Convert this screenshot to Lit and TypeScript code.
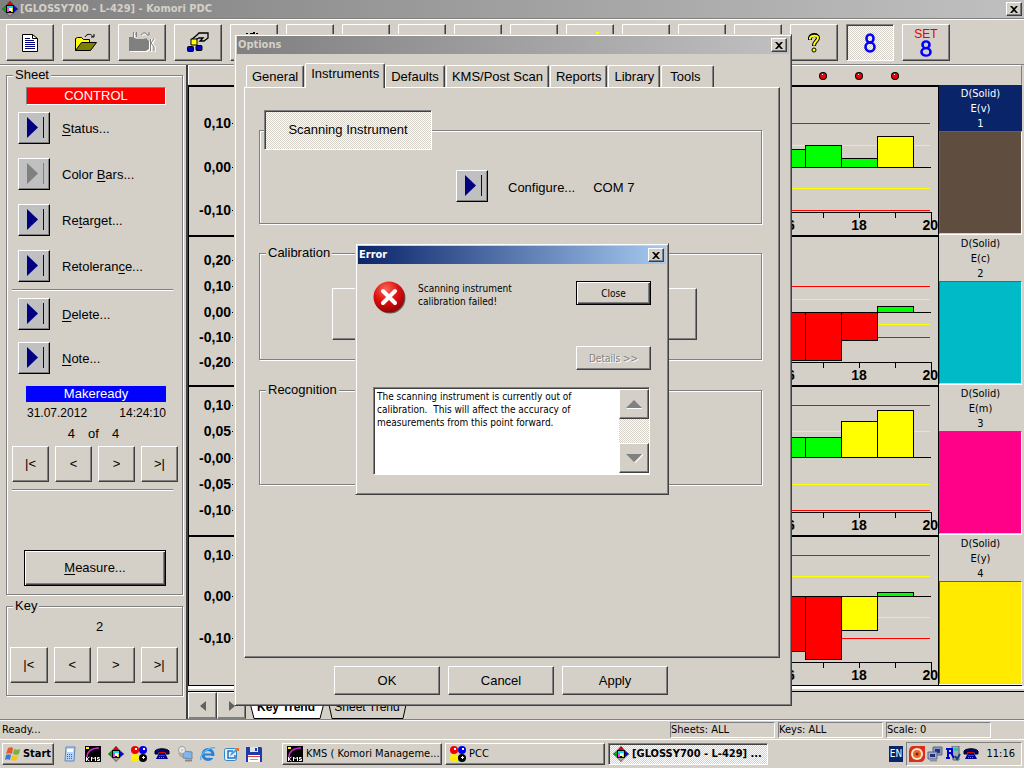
import { LitElement, html, svg, css, nothing, TemplateResult } from "lit";
import { customElement, state } from "lit/decorators.js";
import { classMap } from "lit/directives/class-map.js";

type Color = "lime" | "yellow" | "red";
interface Bar { y: number; color: Color; }
interface Chart {
  name: string;
  index: number;
  swatch: string;
  labels: [string, number][];
  lines: [number, Color][];
  zero: number;
  bars: Bar[];
}

const FILL: Record<Color, string> = { lime: "#00ff00", yellow: "#ffff00", red: "#ff0000" };

const CHARTS: Chart[] = [
  {
    name: "E(v)", index: 1, swatch: "#5f4d3f", zero: 82,
    labels: [["0,10", 38], ["0,00", 82], ["-0,10", 125]],
    lines: [[38, "red"], [60, "yellow"], [103, "yellow"], [125, "red"]],
    bars: [{ y: 64, color: "lime" }, { y: 60, color: "lime" }, { y: 73, color: "lime" }, { y: 51, color: "yellow" }],
  },
  {
    name: "E(c)", index: 2, swatch: "#00bac8", zero: 77,
    labels: [["0,20", 25], ["0,10", 51], ["0,00", 77], ["-0,10", 102], ["-0,20", 127]],
    lines: [[51, "red"], [64, "yellow"], [89, "yellow"], [102, "red"]],
    bars: [{ y: 125, color: "red" }, { y: 125, color: "red" }, { y: 105, color: "red" }, { y: 71, color: "lime" }],
  },
  {
    name: "E(m)", index: 3, swatch: "#ff0088", zero: 72,
    labels: [["0,10", 20], ["0,05", 46], ["-0,00", 73], ["-0,05", 99], ["-0,10", 125]],
    lines: [[20, "red"], [46, "yellow"], [99, "yellow"], [125, "red"]],
    bars: [{ y: 52, color: "lime" }, { y: 52, color: "lime" }, { y: 36, color: "yellow" }, { y: 25, color: "yellow" }],
  },
  {
    name: "E(y)", index: 4, swatch: "#ffea00", zero: 61,
    labels: [["0,10", 20], ["0,00", 61], ["-0,10", 103]],
    lines: [[20, "red"], [41, "yellow"], [82, "yellow"], [103, "red"]],
    bars: [{ y: 116, color: "red" }, { y: 124, color: "red" }, { y: 95, color: "yellow" }, { y: 57, color: "lime" }],
  },
];

const icon = (w: number, h: number, body: TemplateResult) =>
  html`<svg class="icon" width=${w} height=${h} viewBox="0 0 ${w} ${h}" aria-hidden="true">${body}</svg>`;

const diamond = () => icon(16, 16, svg`
  <path d="M8 0l4 5H4z" fill="#e00000"/><path d="M16 8l-5 4V4z" fill="#0000e0"/>
  <path d="M0 8l5-4v8z" fill="#00b000"/><path d="M8 16l-4-5h8z" fill="#a0a0a0"/>
  <path d="M4 4h8v8H4z" fill="#000"/><path d="M5 5h6v2H5z" fill="#00e0f0"/><path d="M5 7h2v4H5z" fill="#f040f0"/>
  <path d="M9 7h2v4H9z" fill="#f0e000"/><path d="M7 7h3v3H7z" fill="#fff"/>
  <path d="M8 .5L15.5 8 8 15.5.5 8z" fill="none" stroke="#333" stroke-width=".6"/>`);

const kms = () => icon(16, 16, svg`
  <path d="M0 0h16v16H0z" fill="#000"/><path d="M2 11C2 6 6 2 14 2" fill="none" stroke="#d020d0" stroke-width="1.6"/>
  <path d="M1 1h3v2H1z" fill="#ffff00"/>
  <path d="M1.500 11v4M4.500 11l-3 2 3 2M6.500 15v-4l2 2 2-2v4M14.500 11.500h-2v1.500h2v1.500h-2.500" fill="none" stroke="#fff" stroke-width="1"/>`);

const balls = () => icon(16, 16, svg`
  <circle cx="4" cy="4" r="4" fill="#f00000"/><circle cx="12" cy="4" r="4" fill="#0000e8"/>
  <circle cx="4" cy="12" r="4" fill="#ffee00"/><circle cx="12" cy="12" r="4" fill="#000"/>
  <path d="M4 2h2v2H4zM12 2h2v2h-2zM12 10h1v3h-1zM11 11h3v1h-3z" fill="#fff"/>`);

const phone = () => icon(16, 16, svg`
  <path d="M1 5c2-3 12-3 14 0v3h-3V6H4v2H1z" fill="#000080" stroke="#000"/>
  <path d="M5 7h6l3 6H2z" fill="#000098"/><path d="M5.500 9.500h5M5 11.500h6" stroke="#f06060" stroke-dasharray="1 1"/><path d="M5 6.500h6" stroke="#e00000"/>`);

const calc = () => icon(16, 16, svg`
  <path d="M4 1h9l-1 14H3z" fill="#b8d4f4" stroke="#5a86c4"/><path d="M5 3h6v3H5z" fill="#fff"/>
  <path d="M5 8.500h6M5 10.500h6M5 12.500h6" stroke="#3a66b0" stroke-dasharray="1 1"/>`);

const search = () => icon(16, 16, svg`
  <path d="M6 5l9 1v7l-9-1z" fill="#7cb8ee" stroke="#7a8490"/><path d="M8 14.500h7" stroke="#888" stroke-width="2"/>
  <circle cx="5" cy="4" r="3.500" fill="#f2f2f0" stroke="#999"/><circle cx="5" cy="4" r="1.500" fill="#c4ccd4"/><path d="M2 7l3 4" stroke="#a8a8a8" stroke-width="2"/>`);

const explorer = () => icon(16, 16, svg`
  <circle cx="8" cy="8.500" r="5" fill="none" stroke="#2480d8" stroke-width="3"/><path d="M4 8.500h9" stroke="#2480d8" stroke-width="2"/>
  <path d="M10 10h6v2h-6z" fill="#d4d0c8"/><path d="M1 14C-1 9 9 0 15 2" fill="none" stroke="#5cb4f4" stroke-width="1.500"/>`);

const mail = () => icon(16, 16, svg`
  <rect x="1.500" y="2.500" width="12" height="12" rx="2" fill="#e4f2fc" stroke="#2c88cc"/>
  <path d="M10 5H5v7h7V9" fill="none" stroke="#2c70b8" stroke-width="1.500"/><path d="M7 10l1-3 6-5 1 2-6 5z" fill="#58a0d8"/><path d="M13 2h3v3h-2z" fill="#f07020"/>`);

const floppy = () => icon(16, 16, svg`
  <path d="M0 1h15l1 1v14H0z" fill="#1c3ca8"/><path d="M4 1h8v5H4z" fill="#e0e4f0"/><path d="M9 2h2v3H9z" fill="#1c3ca8"/>
  <path d="M2 9h12v7H2z" fill="#fff"/><path d="M2 10.500h12" stroke="#e04040"/><path d="M4 13.500h8" stroke="#a0a0a0"/>`);

const windows = () => icon(16, 16, svg`
  <path d="M3 2c2-1 4-1 5 0L7 8c-2-1-4-1-6 0z" fill="#e8582c"/><path d="M9 3c2 1 4 1 6 0l-1 5c-2 1-4 1-6 0z" fill="#74b43c"/>
  <path d="M1 9c2-1 4-1 5 0l-1 5c-2-1-3-1-5 0z" fill="#3c78d8"/><path d="M7 9c2 1 4 1 6 0l-1 5c-2 1-4 1-6 0z" fill="#f4c420"/>`);

const bullseye = () => icon(16, 16, svg`
  <path d="M4 0h12v11c0 3-2 5-5 5H0V5c0-3 2-5 4-5z" fill="#d83018"/><circle cx="8" cy="8" r="6" fill="#fbe8d0"/>
  <circle cx="8" cy="8" r="4" fill="#e86828"/><circle cx="8" cy="8" r="1.500" fill="#802010"/>`);

const network = () => icon(16, 16, svg`
  <path d="M6 1h9v8H6z" fill="#8898c0" stroke="#606880"/><path d="M8 3h5v4H8z" fill="#203080"/>
  <path d="M1 6h9v7H1z" fill="#a0acd0" stroke="#606880"/><path d="M3 8h5v3H3z" fill="#203080"/><path d="M3 14.500h7" stroke="#8890a0" stroke-width="2"/>`);

const usage = () => icon(16, 16, svg`
  <path d="M7 0h7v14H8z" fill="#a8acb0" stroke="#606468"/><path d="M9 2h4v3H9z" fill="#30c0b0"/>
  <path d="M3 12V3h4v4H3M6 7l3 5M1 3h3M1 12h4" fill="none" stroke="#0000d0" stroke-width="2"/><path d="M10 10l2 3 3-5" fill="none" stroke="#104080" stroke-width="2"/>`);

const crossIcon = () => icon(8, 7, svg`<path d="M0 0h2l2 2 2-2h2L5 3.500 8 7H6L4 5 2 7H0l3-3.500z" fill="#000"/>`);
const play = () => icon(30, 30, svg`<path d="M8 4l11 10.500L8 25z" fill="currentColor"/><path d="M24.500 4v21" stroke="currentColor"/>`);

const eight = (h: number) => html`<svg class="icon" width="12" height=${h} viewBox="0 0 12 20" preserveAspectRatio="none" aria-hidden="true">
  <ellipse cx="6" cy="5.500" rx="3.500" ry="4" fill="none" stroke="#0000ff" stroke-width="2.600"/>
  <ellipse cx="6" cy="14" rx="4.500" ry="4.500" fill="none" stroke="#0000ff" stroke-width="2.600"/></svg>`;

const TOOLS: { name: string; kind?: string; body?: () => unknown }[] = [
  { name: "New", body: () => icon(16, 18, svg`<path d="M.5.5h10l5 4v13H.5z" fill="#fff" stroke="#000"/><path d="M10.500.5v4h5" fill="none" stroke="#000"/><path d="M3 4.500h5M3 6.500h9M3 8.500h10M3 10.500h10M3 12.500h10M3 14.500h10" stroke="#000080"/>`) },
  { name: "Open", body: () => icon(24, 20, svg`<path d="M1.500 17.500V5.500l2-1h4l2 2h6v4" fill="#ffff00" stroke="#000"/><path d="M1.500 17.500l6-8h15l-6 8z" fill="#808000" stroke="#000"/><path d="M11 4c2-4 7-3 8 0M17 4h3V1" fill="none" stroke="#000"/>`) },
  { name: "Close job", kind: "off", body: () => icon(28, 24, svg`<path d="M2 7h5l2 2h8l2-1 3 3v8l-3 2H2z" fill="#fff"/><path d="M1 6h5l2 2h8l2-1 3 3v8l-3 2H1z" fill="#808080"/><path d="M5.500 1v5M8.500 1v5M5.500 3h3M13 4c2-3 5-3 6 0h2V1" fill="none" stroke="#808080"/><path d="M6.500 2v5M14 5c2-2 3-2 5 0" fill="none" stroke="#fff"/><path d="M23.500 8v13M27 8l-3 5 3 3v5" fill="none" stroke="#fff" stroke-width="1.500"/><path d="M22.500 8v12M26 8l-3 4 3 4v4" fill="none" stroke="#808080"/>`) },
  { name: "Select colors", body: () => icon(24, 22, svg`<path d="M5 8l6-5 2-2h9v5l-4 3h-4l3-3h-4l-4 2" fill="#d4d0c8" stroke="#000" stroke-width="1.300"/><path d="M5 7h6v6H5z" fill="#ffff00" stroke="#000"/><rect x="1.500" y="14.500" width="6" height="5" rx="1" fill="#0000c8" stroke="#000"/><rect x="10" y="13.500" width="6" height="5" rx="1" fill="#0000c8" stroke="#000"/>`) },
  { name: "Press", body: () => icon(24, 22, svg`<path d="M4 1h2v2H4zM8 1h3V0h2v3H8zM14 1h2v2h-2z" fill="#000"/>`) },
  { name: "Zoom" }, { name: "Copy" }, { name: "Trend" }, { name: "Target" }, { name: "Tolerance" },
  { name: "Highlight", body: () => icon(24, 22, svg`<path d="M18 0h3v2h-3z" fill="#ffff00"/>`) },
  { name: "Print" }, { name: "Layout" }, { name: "Setup" },
  { name: "Help", body: () => icon(14, 20, svg`<path d="M3 7V5c1-4 8-4 8 0 0 3-4 3-4 8" fill="none" stroke="#000" stroke-width="4"/><path d="M3 6.500V5c1-3 8-3 8 0 0 3-4 3-4 7.500" fill="none" stroke="#ffff00" stroke-width="2"/><circle cx="7" cy="17" r="2" fill="#ffff00" stroke="#000"/>`) },
  { name: "Eight", kind: "on", body: () => eight(20) },
  { name: "Set eight", body: () => html`<span class="set">SET</span>${eight(17)}` },
];

@customElement("app-root")
export class AppRoot extends LitElement {
  @state() private tab = "Instruments";

  static styles = css`
    :host {
      display: grid;
      grid-template-rows: 18px 47px 1fr 20px 29px;
      position: relative;
      min-height: 100vh;
      box-sizing: border-box;
      overflow: hidden;
      background: #d4d0c8;
      color: #000;
      font: 13px/16px "Liberation Sans", Arial, sans-serif;
      cursor: default;
    }
    * { box-sizing: border-box; }
    button, textarea { font: inherit; color: inherit; }
    .icon { display: block; flex: none; }
    u { text-underline-offset: 2px; }

    button {
      display: flex;
      align-items: center;
      justify-content: center;
      margin: 0;
      padding: 0;
      background: #d4d0c8;
      border: 1px solid;
      border-color: #fff #404040 #404040 #fff;
      border-radius: 0;
      box-shadow: inset -1px -1px 0 #808080;
    }
    button.on {
      border-color: #808080 #fff #fff #808080;
      box-shadow: inset 1px 1px 0 #404040;
      background: repeating-conic-gradient(#fff 0 25%, #d4d0c8 0 50%) 0 0 / 2px 2px;
    }
    button.default { border: 1px solid #000; box-shadow: inset 1px 1px 0 #fff, inset -1px -1px 0 #404040, inset -2px -2px 0 #808080; }
    button:disabled { color: #808080; text-shadow: 1px 1px 0 #fff; }
    button.play { width: 32px; height: 32px; background: #c0c0c0; color: #000080; flex: none; border-color: #fff #000 #000 #fff; }
    button.play:disabled { color: #808080; }

    .title {
      display: flex;
      align-items: center;
      justify-content: space-between;
      gap: 2px;
      height: 18px;
      padding: 0 2px;
      background: linear-gradient(90deg, #808080, #c0c0c0);
      color: #d4d0c8;
      font: bold 11px/18px "DejaVu Sans Condensed", Tahoma, sans-serif;
    }
    .title .name { flex: 1; margin: 0; font: inherit; white-space: nowrap; }
    .title button { width: 16px; height: 14px; flex: none; }

    .toolbar {
      display: flex;
      gap: 8px;
      padding: 5px 6px 0;
      border-top: 1px solid #808080;
      border-bottom: 1px solid #808080;
      box-shadow: inset 0 1px 0 #fff;
    }
    .toolbar button { width: 48px; height: 37px; flex: none; flex-direction: column; }
    .set { color: #e00000; font-size: 12px; line-height: 11px; }

    .work { display: grid; grid-template-columns: 186px 1fr; min-height: 0; }
    .side { padding: 1px 3px 0 6px; border-top: 1px solid #fff; }
    fieldset {
      min-width: 0;
      margin: 0;
      padding: 0;
      border: 1px solid #808080;
      box-shadow: 1px 1px 0 #fff, inset 1px 1px 0 #fff;
    }
    legend { margin-left: 6px; padding: 0 2px; line-height: 16px; background: #d4d0c8; }
    .sheet { height: 528px; }
    .key { height: 98px; margin-top: 3px; }
    .banner { margin: 0 16px 0 19px; color: #fff; text-align: center; line-height: 16px; }
    .banner.control { margin-top: 4px; background: #ff0000; border: 1px solid; border-color: #808080 #fff #fff #808080; }
    .banner.ready { margin-top: 12px; background: #0000ff; }
    .cmd { display: flex; align-items: center; gap: 12px; margin: 14px 0 0 11px; }
    .cmd label { padding-top: 2px; }
    .cmd.first { margin-top: 7px; }
    .cmd.after { margin-top: 7px; }
    .cmd.near { margin-top: 12px; }
    hr { height: 2px; margin: 7px 9px 0 5px; border: 0; background: #808080; border-bottom: 1px solid #fff; }
    .dates { display: flex; justify-content: space-between; margin: 0 16px 0 20px; font-size: 12px; line-height: 23px; }
    .count { display: flex; justify-content: center; gap: 13px; line-height: 18px; padding-right: 2px; }
    .nav { display: flex; gap: 6px; margin: 3px 4px 0 5px; }
    .nav button { flex: 1; height: 36px; }
    .measure { width: 142px; height: 36px; margin: 59px 0 0 17px; }
    .keyno { text-align: center; line-height: 26px; padding-left: 10px; }
    .key .nav { margin-top: 7px; margin-left: 3px; }

    .board { display: flex; flex-direction: column; border-left: 2px solid #404040; min-width: 0; }
    .strip { height: 20px; margin-right: 2px; border: 1px solid; border-color: #fff #808080 #d4d0c8 #fff; }
    .strip svg { display: block; margin-left: auto; }
    .charts { flex: 1; display: grid; grid-auto-rows: 1fr; border-bottom: 1px solid #000; border-left: 1px solid #000; margin-right: 2px; }
    .chart { display: grid; grid-template-columns: 45px 1fr 83px; min-height: 150px; min-width: 0; }
    .axis, .plot { border-top: 2px solid #000; }
    .plot { border-right: 1px solid #000; overflow: hidden; min-width: 0; display: flex; justify-content: flex-end; }
    .axis svg, .plot svg { display: block; flex: none; }
    .axis text { font: bold 14px "Liberation Sans", Arial, sans-serif; text-anchor: end; }
    .plot text { font: bold 14px "Liberation Sans", Arial, sans-serif; text-anchor: middle; }
    .plot .end { text-anchor: end; }
    .ink { display: flex; flex-direction: column; border-bottom: 1px solid #fff; }
    .ink .head { height: 46px; padding-top: 1px; text-align: center; font: 11px/15px "DejaVu Sans Condensed", Tahoma, sans-serif; }
    .ink.sel .head { background: #0a246a; color: #fff; }
    .ink .fill { flex: 1; border: 1px solid; border-color: #606060 #fff transparent #606060; background-clip: padding-box; }
    .under { height: 6px; background: #fff; border-bottom: 1px solid #000; box-shadow: inset 0 -2px 0 #d4d0c8; }
    .sheets { display: flex; height: 27px; }
    .sheets button { width: 29px; height: 27px; border-color: #fff #404040 #808080 #fff; }
    .trends svg { display: block; }
    .trends text { font: 12px "Liberation Sans", Arial, sans-serif; text-anchor: middle; }
    .trends .cur { font-weight: bold; }

    .status {
      display: flex;
      gap: 3px;
      padding: 2px 33px 1px 2px;
      border-top: 1px solid #808080;
      box-shadow: inset 0 1px 0 #fff;
      font: 11px/16px "DejaVu Sans Condensed", Tahoma, sans-serif;
    }
    .status .msg { flex: 1; }
    .status .cell { width: 105px; height: 16px; line-height: 14px; border: 1px solid; border-color: #808080 #fff #fff #808080; }

    .task {
      display: flex;
      align-items: center;
      padding: 0 2px;
      border-top: 1px solid #fff;
      font: 11px/16px "DejaVu Sans Condensed", Tahoma, sans-serif;
    }
    .start { width: 52px; height: 22px; gap: 2px; font-weight: bold; flex: none; }
    .quick { display: flex; gap: 7px; margin-left: 8px; width: 220px; flex: none; }
    .apps { display: flex; flex: 1; gap: 3px; min-width: 0; }
    .apps button { width: 160px; height: 22px; padding: 0 0 0 4px; gap: 3px; justify-content: flex-start; }
    .apps span { white-space: nowrap; }
    .apps .on { font-weight: bold; }
    .lang { width: 14px; height: 16px; background: #0a246a; color: #fff; text-align: center; margin-right: 3px; font-size: 10px; }
    .tray { display: flex; align-items: center; gap: 2px; width: 116px; height: 24px; padding: 0 6px 0 2px; border: 1px solid; border-color: #808080 #fff #fff #808080; }
    .tray time { margin-left: auto; }

    .window {
      position: absolute;
      display: flex;
      flex-direction: column;
      padding: 1px;
      background: #d4d0c8;
      border: 1px solid;
      border-color: #d4d0c8 #404040 #404040 #d4d0c8;
      box-shadow: inset 1px 1px 0 #fff, inset -1px -1px 0 #808080;
    }
    .options { left: 234px; top: 34px; bottom: 62px; width: 558px; }
    .options .title { margin: 0 1px; flex: none; padding-left: 1px; }
    .tabs { display: flex; align-items: flex-end; height: 33px; padding-left: 10px; flex: none; }
    .tabs button {
      height: 22px;
      border-bottom: 0;
      border-radius: 2px 2px 0 0;
      box-shadow: inset -1px 0 0 #808080;
      padding: 0 5px;
      margin-right: 1px;
      white-space: nowrap;
    }
    .tabs .cur { height: 25px; margin: 0 0 -1px; padding: 0 5px 4px; z-index: 1; }
    .tabs .last { padding: 0 12px 0 8px; }
    .page {
      flex: 1;
      margin: 0 10px 0 8px;
      padding: 22px 17px 0 14px;
      border: 1px solid;
      border-color: #fff #404040 #404040 #fff;
      box-shadow: inset -1px -1px 0 #808080;
    }
    .scan { height: 114px; }
    .scan legend { margin-left: 4px; padding: 0; }
    .scan legend button { width: 168px; height: 40px; }
    .config { display: flex; align-items: center; gap: 18px; margin: 20px 0 0 196px; }
    .config label { margin-left: 2px; padding-top: 4px; }
    .config span { padding-top: 4px; }
    .calib { height: 115px; margin-top: 21px; }
    .calib button { width: 365px; height: 52px; margin: 27px 0 0 72px; }
    .recog { height: 103px; margin-top: 22px; }
    .foot { display: flex; justify-content: center; gap: 8px; padding: 8px 0 9px; margin-right: 24px; }
    .foot button { width: 106px; height: 29px; }

    .error { left: 355px; top: 243px; width: 314px; font: 10px/13px "DejaVu Sans Condensed", Tahoma, sans-serif; }
    .error .title { margin: 1px; padding-left: 1px; color: #fff; background: linear-gradient(90deg, #0a246a, #a6caf0); }
    .alert { display: grid; grid-template-columns: 45px 1fr 75px; padding: 16px 16px 0 16px; }
    .alert p { margin: 0; padding-top: 1px; white-space: pre-line; }
    .alert .acts { display: grid; gap: 41px; }
    .alert button { height: 24px; }
    .memo { display: flex; margin: 17px 17px 18px 16px; height: 88px; background: #fff; border: 1px solid; border-color: #808080 #fff #fff #808080; box-shadow: inset 1px 1px 0 #404040; padding: 1px 0 1px 1px; }
    .memo textarea { flex: 1; min-width: 0; margin: 0; padding: 1px 2px; border: 0; resize: none; overflow: hidden; background: transparent; white-space: pre; outline: none; }
    .bar { width: 30px; display: flex; flex-direction: column; justify-content: space-between; background: repeating-conic-gradient(#fff 0 25%, #d4d0c8 0 50%) 0 0 / 2px 2px; }
    .bar button { height: 30px; }
  `;

  private command(id: string, label: unknown, cls = "", disabled = false) {
    return html`<div class="cmd ${cls}">
      <button class="play" id=${id} ?disabled=${disabled}>${play()}</button>
      <label for=${id}>${label}</label>
    </div>`;
  }

  private nav(what: string) {
    return html`<div class="nav">
      <button aria-label="First ${what}">|&lt;</button>
      <button aria-label="Previous ${what}">&lt;</button>
      <button aria-label="Next ${what}">&gt;</button>
      <button aria-label="Last ${what}">&gt;|</button>
    </div>`;
  }

  private plot(c: Chart) {
    const right = 145;
    return html`<svg width="169" height="148" viewBox="0 2 169 148" aria-label="${c.name} trend" role="img" shape-rendering="crispEdges">
      ${c.lines.map(([y, color]) => svg`<path d="M0 ${y + 0.5}H161" stroke=${FILL[color]}/>`)}
      <path d=${`M0 ${c.zero + 0.5}H162`} stroke="#000"/>
      ${c.bars.map((b, i) => {
        const x = right - (c.bars.length - i) * 36;
        return svg`<rect x=${x - 0.5} y=${Math.min(b.y, c.zero) + 0.5} width="36" height=${Math.abs(b.y - c.zero)} fill=${FILL[b.color]} stroke="#000"/>`;
      })}
      <path d="M0 127.500H162.500M18.500 127v6M54.500 127v6M90.500 127v6M126.500 127v6M162.500 127v16" fill="none" stroke="#000"/>
      <text x="18" y="145">16</text><text x="90" y="145">18</text><text class="end" x="169" y="145">20</text>
    </svg>`;
  }

  private chart(c: Chart) {
    return html`<div class="chart">
      <div class="axis"><svg width="45" height="148" viewBox="0 2 45 148">
        ${c.labels.map(([t, y]) => svg`<text x="42" y=${y + 5}>${t}</text><path d="M43 ${y + 0.5}h1" stroke="#000"/>`)}
      </svg></div>
      <div class="plot">${this.plot(c)}</div>
      <div class=${classMap({ ink: true, sel: c.index === 1 })}>
        <div class="head">D(Solid)<br />${c.name}<br />${c.index}</div>
        <div class="fill" style="background-color:${c.swatch}"></div>
      </div>
    </div>`;
  }

  private options() {
    const tabs = ["General", "Instruments", "Defaults", "KMS/Post Scan", "Reports", "Library", "Tools"];
    return html`<section class="window options" role="dialog" aria-label="Options">
      <header class="title"><h2 class="name">Options</h2><button aria-label="Close options">${crossIcon()}</button></header>
      <nav class="tabs" role="tablist">
        ${tabs.map((t) => html`<button role="tab" class=${classMap({ cur: t === this.tab, last: t === "Tools" })}
          aria-selected=${t === this.tab} @click=${() => (this.tab = t)}>${t}</button>`)}
      </nav>
      <div class="page">
        <fieldset class="scan">
          <legend><button class="on">Scanning Instrument</button></legend>
          <div class="config"><button class="play" id="configure">${play()}</button>
            <label for="configure">Configure...</label><span>COM 7</span></div>
        </fieldset>
        <fieldset class="calib"><legend>Calibration</legend><button aria-label="Calibrate"></button></fieldset>
        <fieldset class="recog"><legend>Recognition</legend></fieldset>
      </div>
      <footer class="foot"><button>OK</button><button>Cancel</button><button>Apply</button></footer>
    </section>`;
  }

  private error() {
    return html`<section class="window error" role="alertdialog" aria-label="Error">
      <header class="title"><h2 class="name">Error</h2><button aria-label="Close error">${crossIcon()}</button></header>
      <div class="alert">
        ${icon(33, 33, svg`<defs><radialGradient id="ball" cx=".4" cy=".25" r=".8"><stop offset="0" stop-color="#f86858"/><stop offset=".5" stop-color="#e01010"/><stop offset="1" stop-color="#900000"/></radialGradient></defs>
          <circle cx="17" cy="17" r="15.500" fill="#606060"/><circle cx="16" cy="16" r="15.500" fill="url(#ball)"/>
          <path d="M10 10l12 12M22 10L10 22" stroke="#fff" stroke-width="4" stroke-linecap="round"/>`)}
        <p>Scanning instrument
calibration failed!</p>
        <div class="acts"><button class="default">Close</button><button disabled>Details &gt;&gt;</button></div>
      </div>
      <div class="memo">
        <textarea readonly aria-label="Details" .value=${"The scanning instrument is currently out of\ncalibration.  This will affect the accuracy of\nmeasurements from this point forward."}></textarea>
        <div class="bar">
          <button aria-label="Scroll up">${icon(18, 10, svg`<path d="M2 9h15v1H2z" fill="#fff"/><path d="M1 9l8-8 8 8z" fill="#808080"/>`)}</button>
          <button aria-label="Scroll down">${icon(18, 10, svg`<path d="M10 10l8-8v-1z" stroke="#fff"/><path d="M1 1h16L9 9z" fill="#808080"/>`)}</button>
        </div>
      </div>
    </section>`;
  }

  render() {
    return html`
      <header class="title">${diamond()}<h1 class="name">[GLOSSY700 - L-429] - Komori PDC</h1><button aria-label="Close">${crossIcon()}</button></header>
      <nav class="toolbar">
        ${TOOLS.map((t) => html`<button class=${t.kind === "on" ? "on" : ""} ?disabled=${t.kind === "off"} aria-label=${t.name}>${t.body ? t.body() : nothing}</button>`)}
      </nav>
      <main class="work">
        <aside class="side">
          <fieldset class="sheet"><legend>Sheet</legend>
            <div class="banner control">CONTROL</div>
            ${this.command("status", html`<u>S</u>tatus...`, "first")}
            ${this.command("bars", html`Color <u>B</u>ars...`, "", true)}
            ${this.command("retarget", html`Re<u>t</u>arget...`)}
            ${this.command("retolerance", html`Retoleran<u>c</u>e...`)}
            <hr />
            ${this.command("delete", html`<u>D</u>elete...`, "after")}
            ${this.command("note", html`<u>N</u>ote...`, "near")}
            <div class="banner ready">Makeready</div>
            <div class="dates"><span>31.07.2012</span><span>14:24:10</span></div>
            <div class="count"><span>4</span><span>of</span><span>4</span></div>
            ${this.nav("sheet")}
            <hr />
            <button class="measure default"><span><u>M</u>easure...</span></button>
          </fieldset>
          <fieldset class="key"><legend>Key</legend>
            <div class="keyno">2</div>
            ${this.nav("key")}
          </fieldset>
        </aside>
        <section class="board">
          <div class="strip"><svg width="215" height="18" viewBox="0 0 215 18" aria-hidden="true">
            ${[17, 53, 89].map((x) => svg`<circle cx=${x} cy="10" r="4" fill="#000"/><circle cx=${x} cy="10" r="3" fill="#f00000"/><path d="M${x - 1} 8h1v1h-1z" fill="#fff"/>`)}
          </svg></div>
          <div class="charts">${CHARTS.map((c) => this.chart(c))}</div>
          <div class="under"></div>
          <div class="sheets">
            <button aria-label="Scroll tabs left">${icon(6, 10, svg`<path d="M6 0v10L0 5z" fill="#606060"/>`)}</button>
            <button aria-label="Scroll tabs right">${icon(6, 10, svg`<path d="M0 0v10l6-5z" fill="#606060"/>`)}</button>
            <div class="trends"><svg width="170" height="27" viewBox="0 0 170 27">
              <path d="M80 -1l6 27.500h71l6-27.500" fill="#d4d0c8" stroke="#000"/>
              <path d="M1 -1l7 27.500h66l7-27.500z" fill="#fff" stroke="#000"/>
              <text class="cur" x="40" y="19">Key Trend</text><text x="121" y="19">Sheet Trend</text>
            </svg></div>
          </div>
        </section>
      </main>
      <footer class="status"><span class="msg">Ready...</span><span class="cell">Sheets: ALL</span><span class="cell">Keys: ALL</span><span class="cell">Scale: 0</span></footer>
      <footer class="task">
        <button class="start">${windows()}Start</button>
        <div class="quick">${calc()}${kms()}${diamond()}${balls()}${phone()}${search()}${explorer()}${mail()}${floppy()}</div>
        <div class="apps">
          <button>${kms()}<span>KMS ( Komori Manageme...</span></button>
          <button>${balls()}<span>PCC</span></button>
          <button class="on">${diamond()}<span>[GLOSSY700 - L-429] ...</span></button>
        </div>
        <span class="lang">EN</span>
        <div class="tray">${bullseye()}${network()}${usage()}${phone()}<time>11:16</time></div>
      </footer>
      ${this.options()}${this.error()}
    `;
  }
}
